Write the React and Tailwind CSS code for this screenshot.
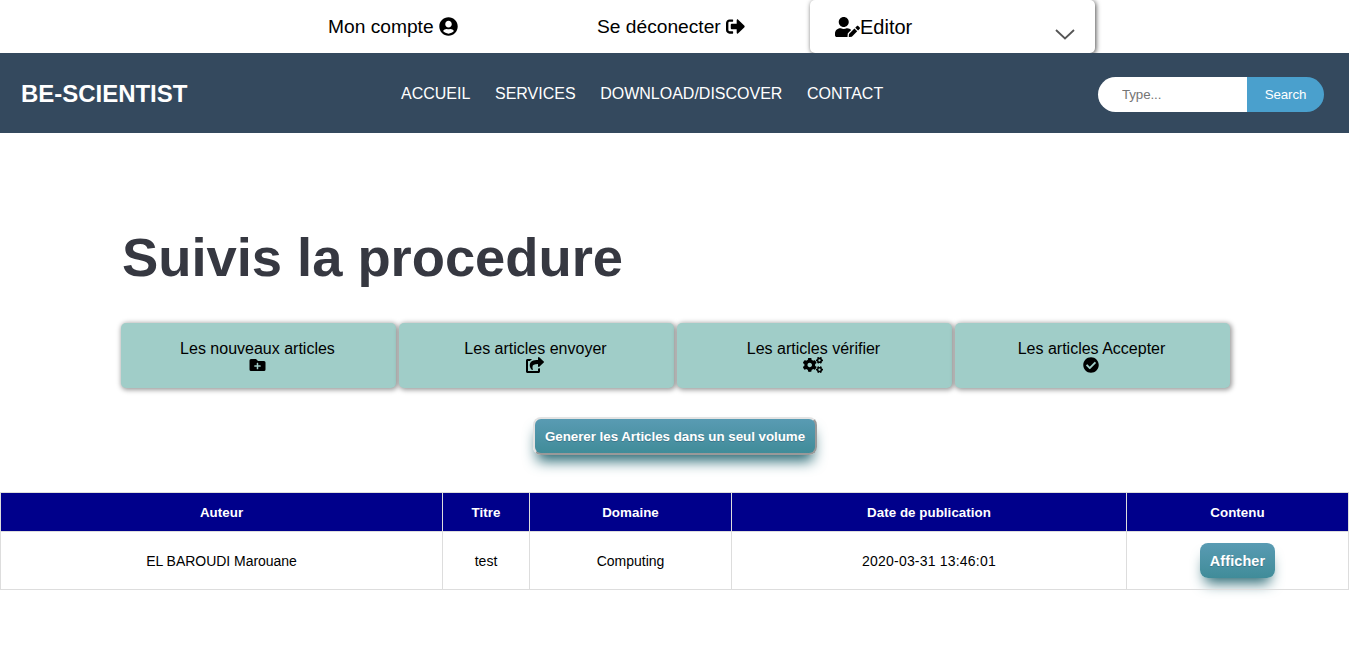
import { FaUserCircle, FaSignOutAlt, FaUserEdit, FaFolderPlus, FaShareSquare, FaCogs, FaCheckCircle } from "react-icons/fa";

const links = ["ACCUEIL", "SERVICES", "DOWNLOAD/DISCOVER", "CONTACT"];

const cards = [
  { label: "Les nouveaux articles", Icon: FaFolderPlus, size: "h-4 w-[17px]" },
  { label: "Les articles envoyer", Icon: FaShareSquare, size: "mr-px h-4 w-[18px]" },
  { label: "Les articles vérifier", Icon: FaCogs, size: "mr-px h-4 w-5" },
  { label: "Les articles Accepter", Icon: FaCheckCircle, size: "mr-px h-4 w-4" },
];

const columns = [
  { title: "Auteur", width: "w-[442px]" },
  { title: "Titre", width: "w-[87px]" },
  { title: "Domaine", width: "w-[202px]" },
  { title: "Date de publication", width: "w-[395px]" },
  { title: "Contenu", width: "w-[222px]" },
];

function TopBar() {
  return (
    <div className="flex h-[53px] overflow-hidden bg-white text-[19.2px] text-black">
      <div className="ml-[328px] flex h-full w-[269px] items-center gap-[5px]">
        <span className="pt-px">Mon compte</span>
        <FaUserCircle className="size-[19px]" />
      </div>
      <div className="flex h-full w-[213px] items-center gap-[5px]">
        <span className="pt-px">Se déconecter</span>
        <FaSignOutAlt className="size-[19px]" />
      </div>
      <div className="flex h-[53px] w-[285px] items-center rounded-[5px] bg-white pr-5 pl-[25px] text-xl shadow-[1px_1px_5px_rgba(0,0,0,0.7)]">
        <FaUserEdit className="h-5 w-[25px]" />
        <span>Editor</span>
        <svg className="mt-4 ml-auto h-[11px] w-5" viewBox="0 0 20 11" fill="none" stroke="#555" strokeWidth="1.8">
          <path d="M1 1 L10 9.5 L19 1" />
        </svg>
      </div>
    </div>
  );
}

function NavBar() {
  return (
    <nav className="flex h-20 items-center bg-[#34495e] pt-[2px] pr-[25px] pl-[21px] text-white">
      <span className="w-[380px] text-2xl font-bold tracking-[-0.03px]">BE-SCIENTIST</span>
      <ul className="flex gap-[24.6px] text-base">
        {links.map((l) => (
          <li key={l}>{l}</li>
        ))}
      </ul>
      <form className="ml-auto flex h-[35px] text-[13.33px]">
        <input
          className="w-[149px] rounded-l-full bg-white pt-[2px] pl-6 tracking-[-0.1px] text-black placeholder:text-[#757575]"
          placeholder="Type..."
        />
        <button type="button" className="w-[77px] rounded-r-full bg-[#4aa0cd] pt-px tracking-[-0.15px]">
          Search
        </button>
      </form>
    </nav>
  );
}

export default function App() {
  return (
    <div className="min-h-screen overflow-hidden bg-white font-['Liberation_Sans',Arial,sans-serif] text-black">
      <TopBar />
      <NavBar />
      <main>
        <h1 className="mt-[94px] ml-[122px] text-[54.4px] leading-[62px] font-bold tracking-[-0.04px] text-[#363841]">
          Suivis la procedure
        </h1>
        <div className="mt-[34px] ml-[121px] flex gap-[3px]">
          {cards.map(({ label, Icon, size }) => (
            <div
              key={label}
              className="flex h-[65px] w-[275px] flex-col items-center rounded-[5px] bg-[#a0cdc8] pt-[17px] pr-[2px] text-base leading-[17px] shadow-[1px_1px_5px_1px_rgba(0,0,0,0.4)]"
            >
              <span>{label}</span>
              <Icon className={size} />
            </div>
          ))}
        </div>
        <div className="mt-[29px] ml-[533px] flex">
          <button className="h-[38px] w-[284px] rounded-lg border-2 border-t-[#e3e3e3] border-r-[#999] border-b-[#999] border-l-[#e3e3e3] bg-linear-to-b from-[#599bb3] to-[#408c99] pt-px text-[13.33px] font-bold tracking-[-0.02px] whitespace-nowrap text-white shadow-[0_10px_14px_-4px_#276873] [text-shadow:0_1px_0_#3d768a]">
            Generer les Articles dans un seul volume
          </button>
        </div>
        <table className="mt-[37px] w-[1349px] table-fixed border-collapse text-center">
          <thead>
            <tr className="h-[39px] bg-[#00008b] text-[13.33px] text-white">
              {columns.map((c) => (
                <th key={c.title} className={`border border-[#ddd] p-0 pt-[2px] font-bold tracking-[0.05px] ${c.width}`}>
                  {c.title}
                </th>
              ))}
            </tr>
          </thead>
          <tbody>
            <tr className="h-[58px] text-sm">
              <td className="border border-[#ddd] p-0 tracking-[-0.03px]">EL BAROUDI Marouane</td>
              <td className="border border-[#ddd] p-0">test</td>
              <td className="border border-[#ddd] p-0">Computing</td>
              <td className="border border-[#ddd] p-0 tracking-[0.2px]">2020-03-31 13:46:01</td>
              <td className="border border-[#ddd] p-0">
                <button className="mx-auto block h-[35px] w-[75px] rounded-lg bg-linear-to-b from-[#599bb3] to-[#408c99] pt-px text-[14.4px] font-bold tracking-[0.15px] text-white shadow-[0_10px_14px_-5px_#276873] [text-shadow:0_1px_0_#3d768a]">
                  Afficher
                </button>
              </td>
            </tr>
          </tbody>
        </table>
      </main>
    </div>
  );
}
